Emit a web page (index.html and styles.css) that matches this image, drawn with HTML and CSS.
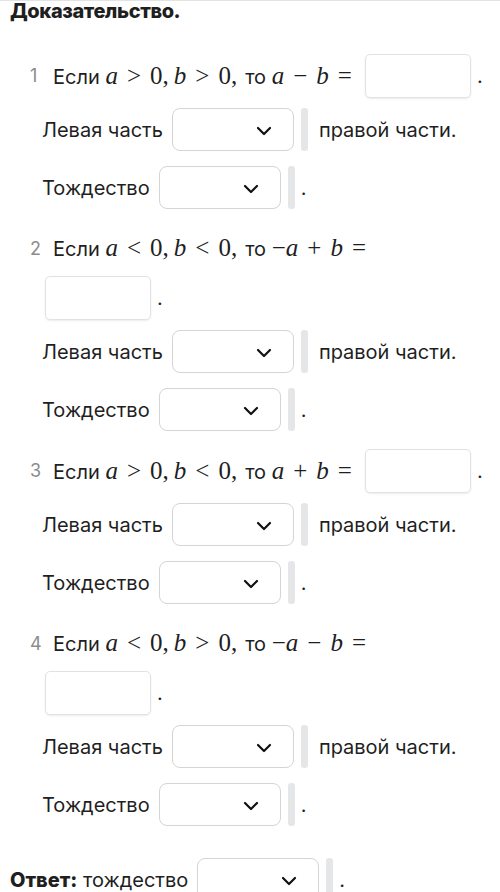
FILE: index.html
```html
<!DOCTYPE html>
<html lang="ru">
<head>
    <meta charset="UTF-8">
    <meta name="viewport" content="width=device-width, initial-scale=1.0">
    <title>Доказательство</title>
    <link rel="stylesheet" href="styles.css">
</head>
<body>
    <div class="proof">
        <h2 class="title">Доказательство.</h2>

        <ol class="steps">
            <li class="step">
                <div class="step-line">
                    <span class="num">1</span>
                    <span class="text">Если <span class="math"><i>a</i><span class="rel">&gt;</span>0<span class="punct">,</span><i>b</i><span class="rel">&gt;</span>0<span class="punct">,</span></span>то <span class="math"><i>a</i><span class="bin">−</span><i>b</i><span class="rel rel-end">=</span></span></span>
                    <span class="field-group"><span class="field"></span>.</span>
                </div>
                <div class="row">Левая часть <span class="select"><svg width="16" height="10" viewBox="0 0 16 10"><path d="M2 2 L8 8 L14 2" /></svg></span><span class="bar"></span><span class="after">правой части.</span></div>
                <div class="row">Тождество <span class="select"><svg width="16" height="10" viewBox="0 0 16 10"><path d="M2 2 L8 8 L14 2" /></svg></span><span class="bar"></span><span class="dot">.</span></div>
            </li>

            <li class="step">
                <div class="step-line wrap">
                    <span class="num">2</span>
                    <span class="text">Если <span class="math"><i>a</i><span class="rel">&lt;</span>0<span class="punct">,</span><i>b</i><span class="rel">&lt;</span>0<span class="punct">,</span></span>то <span class="math">−<i>a</i><span class="bin">+</span><i>b</i><span class="rel rel-end">=</span></span></span>
                    <span class="field-group"><span class="field"></span>.</span>
                </div>
                <div class="row">Левая часть <span class="select"><svg width="16" height="10" viewBox="0 0 16 10"><path d="M2 2 L8 8 L14 2" /></svg></span><span class="bar"></span><span class="after">правой части.</span></div>
                <div class="row">Тождество <span class="select"><svg width="16" height="10" viewBox="0 0 16 10"><path d="M2 2 L8 8 L14 2" /></svg></span><span class="bar"></span><span class="dot">.</span></div>
            </li>

            <li class="step">
                <div class="step-line">
                    <span class="num">3</span>
                    <span class="text">Если <span class="math"><i>a</i><span class="rel">&gt;</span>0<span class="punct">,</span><i>b</i><span class="rel">&lt;</span>0<span class="punct">,</span></span>то <span class="math"><i>a</i><span class="bin">+</span><i>b</i><span class="rel rel-end">=</span></span></span>
                    <span class="field-group"><span class="field"></span>.</span>
                </div>
                <div class="row">Левая часть <span class="select"><svg width="16" height="10" viewBox="0 0 16 10"><path d="M2 2 L8 8 L14 2" /></svg></span><span class="bar"></span><span class="after">правой части.</span></div>
                <div class="row">Тождество <span class="select"><svg width="16" height="10" viewBox="0 0 16 10"><path d="M2 2 L8 8 L14 2" /></svg></span><span class="bar"></span><span class="dot">.</span></div>
            </li>

            <li class="step">
                <div class="step-line wrap">
                    <span class="num">4</span>
                    <span class="text">Если <span class="math"><i>a</i><span class="rel">&lt;</span>0<span class="punct">,</span><i>b</i><span class="rel">&gt;</span>0<span class="punct">,</span></span>то <span class="math">−<i>a</i><span class="bin">−</span><i>b</i><span class="rel rel-end">=</span></span></span>
                    <span class="field-group"><span class="field"></span>.</span>
                </div>
                <div class="row">Левая часть <span class="select"><svg width="16" height="10" viewBox="0 0 16 10"><path d="M2 2 L8 8 L14 2" /></svg></span><span class="bar"></span><span class="after">правой части.</span></div>
                <div class="row">Тождество <span class="select"><svg width="16" height="10" viewBox="0 0 16 10"><path d="M2 2 L8 8 L14 2" /></svg></span><span class="bar"></span><span class="dot">.</span></div>
            </li>
        </ol>

        <div class="row answer"><b>Ответ:</b>&nbsp;тождество <span class="select"><svg width="16" height="10" viewBox="0 0 16 10"><path d="M2 2 L8 8 L14 2" /></svg></span><span class="bar"></span><span class="dot">.</span></div>
    </div>
</body>
</html>
```

FILE: styles.css
```css
body {
    margin: 0;
    font-family: Inter, "Noto Sans", sans-serif;
    font-size: 20px;
    color: #1f1f1f;
    background-color: #fff;
    border-top: 1px solid #e3e3e3;
}
.proof {
    padding: 0 10px;
}
.title {
    margin: 0;
    font-size: 20px;
    font-weight: 800;
    line-height: 20px;
    letter-spacing: -0.4px;
}
.steps {
    list-style: none;
    margin: 33px 0 0;
    padding: 0 0 0 35px;
}
.step {
    margin-bottom: 18px;
}
.step-line {
    display: flex;
    flex-wrap: wrap;
    align-items: center;
    row-gap: 6px;
}
.num {
    width: 23px;
    margin-left: -15px;
    color: #8c8c8c;
    font-size: 18px;
    line-height: 42px;
}
.text {
    line-height: 42px;
    white-space: nowrap;
}
.math {
    font-family: "Liberation Serif", "Times New Roman", serif;
    font-size: 25px;
    margin-right: 3px;
}
.math i {
    font-style: italic;
}
.rel {
    margin: 0 9px;
}
.rel-end {
    margin-right: 0;
}
.bin {
    margin: 0 9px;
}
.punct {
    margin-right: 5px;
}
.field-group {
    display: flex;
    align-items: center;
    margin-left: 10px;
}
.wrap .field-group {
    flex-basis: 100%;
    margin-left: 0;
}
.field {
    display: inline-block;
    width: 106px;
    height: 44px;
    box-sizing: border-box;
    border: 1px solid #e2e2e2;
    border-radius: 5px;
    box-shadow: 0 1px 2px rgba(0,0,0,0.08);
    margin-right: 6px;
}
.row {
    display: flex;
    align-items: center;
    margin-top: 10px;
    margin-left: -3px;
}
.row + .row {
    margin-top: 15px;
}
.select {
    display: flex;
    align-items: center;
    justify-content: flex-end;
    width: 122px;
    height: 43px;
    box-sizing: border-box;
    margin-left: 9px;
    padding: 3px 21px 0 0;
    border: 1px solid #d4d4d4;
    border-radius: 8px;
    background: #fff;
}
.select path {
    fill: none;
    stroke: #111;
    stroke-width: 2.2;
    stroke-linecap: round;
    stroke-linejoin: round;
}
.bar {
    width: 7px;
    height: 43px;
    margin-left: 7px;
    border-radius: 3px;
    background-color: #e4e6e8;
}
.after {
    margin-left: 11px;
}
.dot {
    margin-left: 6px;
}
.answer {
    margin: 32px 0 0;
}
.answer b {
    font-weight: 800;
}
```
